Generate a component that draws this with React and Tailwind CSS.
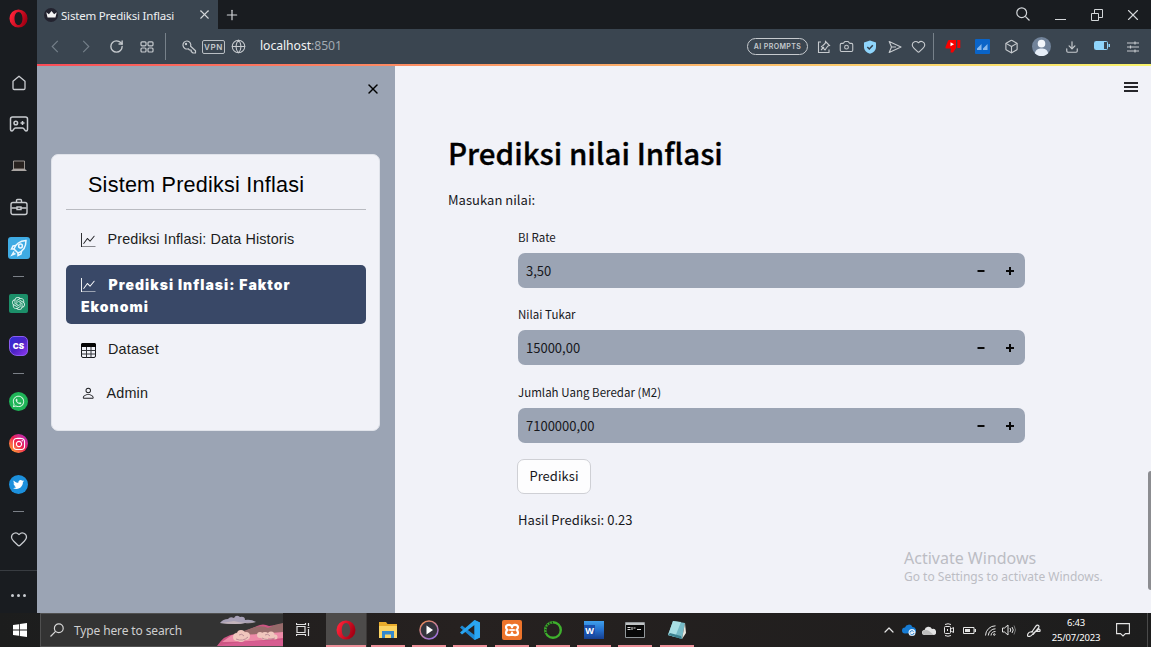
import React from "react";
import { ChevronLeft, ChevronRight, ChevronUp, RotateCw, Globe, Search, X, Plus, Camera, Heart, Box, Download } from "lucide-react";
import { BsGraphUp, BsPerson } from "react-icons/bs";
import { FaInstagram, FaTwitter, FaWhatsapp } from "react-icons/fa";
import { SiOpenai } from "react-icons/si";

const UI = "font-['Noto_Sans',sans-serif]";

function OperaRing({ className }) {
  return (
    <svg viewBox="0 0 20 20" className={className}>
      <defs>
        <linearGradient id="operaRed" x1="0" y1="0" x2="1" y2="0.4">
          <stop offset="0.2" stopColor="#fb2036" />
          <stop offset="1" stopColor="#a70014" />
        </linearGradient>
      </defs>
      <path fillRule="evenodd" fill="url(#operaRed)" d="M10 .5a9.5 9.5 0 1 0 0 19 9.5 9.5 0 0 0 0-19Zm0 2.6c2.5 0 4.2 3 4.2 6.9s-1.700 6.900-4.200 6.900S5.800 13.900 5.800 10 7.500 3.100 10 3.100Z" />
    </svg>
  );
}

function Cell({ className, children }) {
  return <div className={"flex shrink-0 items-center justify-center " + className}>{children}</div>;
}

function Dash() {
  return <div className="h-px w-[11px] bg-[#7b8087]" />;
}

function Sidebar() {
  return (
    <aside className="flex w-[37px] shrink-0 flex-col bg-[#191c20] text-[#c9ccd0]">
      <Cell className="mb-[26px] h-9"><OperaRing className="size-[19px]" /></Cell>
      <Cell className="h-[42px]">
        <svg viewBox="0 0 16 16" className="size-4" fill="none" stroke="currentColor" strokeWidth="1.3"><path d="M8 1.200 2 6.300V13.200q0 1.300 1.300 1.300h9.400q1.300 0 1.300-1.300V6.300Z" strokeLinejoin="round" /></svg>
      </Cell>
      <Cell className="h-[41px] pb-px">
        <svg viewBox="0 0 20 18" className="h-[18px] w-5" fill="none" stroke="currentColor" strokeWidth="1.500"><path d="M3.500 2h13q2 0 2 2v10.500q0 1.500-1.500 1.500c-1.500 0-1.500-3-3.500-3h-7c-2 0-2 3-3.500 3q-1.500 0-1.500-1.500V4q0-2 2-2Z" /><circle cx="6.800" cy="8" r="1.800" /><path d="M13.500 6v4M11.500 8h4" /></svg>
      </Cell>
      <Cell className="h-[42px]">
        <svg viewBox="0 0 16 12" className="h-3 w-4"><path d="M2.500 1h11v8h-11z" fill="#28221f" stroke="#b5aeaa" strokeWidth=".8" /><path d="M0 11l2-2h12l2 2z" fill="#aaa5a2" /></svg>
      </Cell>
      <Cell className="h-10">
        <svg viewBox="0 0 18 18" className="size-[18px]" fill="none" stroke="currentColor" strokeWidth="1.400"><rect x="1" y="4.500" width="16" height="12" rx="2" /><path d="M6.500 4.500V2.500q0-1 1-1h3q1 0 1 1v2M1.500 10H7M11 10h5.500M7 9h4v2.500H7z" /></svg>
      </Cell>
      <Cell className="h-[42px]">
        <div className="flex size-[22px] items-center justify-center rounded-[3px] bg-[#3fabe3]">
          <svg viewBox="0 0 18 18" className="size-[18px]" fill="none" stroke="#eaf7ff" strokeWidth="1.500"><path d="M4 10C5.500 5.500 9.500 2 16 1.500 16 8 12.500 12.500 8 14Z" /><circle cx="10.500" cy="7" r="1.900" /><path d="M6 6.500 3 7l-1.500 3L4 10M11.500 12l-.5 3-3 1.500V14M4 12.500 2 16l3.500-1.500" /></svg>
        </div>
      </Cell>
      <Cell className="h-[14px]"><Dash /></Cell>
      <Cell className="h-[42px] pb-px">
        <div className="flex size-[19px] items-center justify-center rounded-[2px] bg-[#1c8f69]"><SiOpenai className="size-[13px] text-[#dcefe8]" /></div>
      </Cell>
      <Cell className="h-[41px]">
        <div className="flex h-5 w-[19px] items-center justify-center rounded-[5px] rounded-bl-[8px] border border-[#8a5cf0] bg-linear-to-br from-[#2a2fd8] via-[#4c22c4] to-[#8e35ee] font-['Inter',sans-serif] text-[8px] leading-none font-black text-white">CS</div>
      </Cell>
      <Cell className="h-[15px]"><Dash /></Cell>
      <Cell className="h-[42px] pb-px">
        <div className="flex size-[19px] items-center justify-center rounded-full bg-[#1fb457]"><FaWhatsapp className="size-[13px] text-[#d9f5e3]" /></div>
      </Cell>
      <Cell className="h-[41px]">
        <div className="flex size-[19px] items-center justify-center rounded-full bg-linear-to-bl from-[#b010c8] via-[#f01a50] to-[#ffb010]"><FaInstagram className="size-[14px] text-white" /></div>
      </Cell>
      <Cell className="h-[41px]">
        <div className="flex size-[19px] items-center justify-center rounded-full bg-[#1c90dc]"><FaTwitter className="size-[11px] text-white" /></div>
      </Cell>
      <Cell className="h-[14px] pb-px"><Dash /></Cell>
      <Cell className="h-[42px] pb-[2px]"><Heart className="size-[18px]" strokeWidth={1.7} /></Cell>
      <div className="mt-[9px] flex flex-1 items-center justify-center gap-[3px] border-t border-[#383c41] pt-[6px]">
        <span className="size-[3px] rounded-full bg-[#c9ccd0]" />
        <span className="size-[3px] rounded-full bg-[#c9ccd0]" />
        <span className="size-[3px] rounded-full bg-[#c9ccd0]" />
      </div>
    </aside>
  );
}

function TabBar() {
  return (
    <div className="flex h-[29px] shrink-0 bg-[#191c20] text-[#d3d6d9]">
      <div className="flex w-[181px] items-center bg-[#3a4550] pl-[7px]">
        <div className="flex size-[14px] items-center justify-center rounded-full bg-[#23232f]">
          <svg viewBox="0 0 12 8" className="h-[7px] w-[11px]" fill="#f3f3f3"><path d="M0 1.500 3 3.800 6 0l3 3.800 3-2.300L10.500 7.500h-9z" /></svg>
        </div>
        <span className={"ml-[3px] w-[130px] whitespace-nowrap pt-[2px] text-[11.500px] tracking-[-0.200px] text-[#eef0f2] " + UI}>Sistem Prediksi Inflasi</span>
        <X className="ml-[6px] size-[15px]" strokeWidth={1.7} />
      </div>
      <Cell className="w-[27px]"><Plus className="size-4" strokeWidth={1.8} /></Cell>
      <div className="ml-auto flex">
        <Cell className="w-[30px] pb-[2px]">
          <svg viewBox="0 0 14 14" className="size-[14px]" fill="none" stroke="currentColor" strokeWidth="1.200"><circle cx="5.700" cy="5.700" r="4.900" /><path d="m9.300 9.300 4.200 4.200" /></svg>
        </Cell>
        <Cell className="ml-[10px] w-6 pt-[10px]"><div className="h-px w-[11px] bg-[#d3d6d9]" /></Cell>
        <Cell className="ml-3 w-[26px]">
          <svg viewBox="0 0 12 12" className="size-3" fill="none" stroke="currentColor"><path d="M.5 4.500h7v7h-7zM3.500 4.500v-4h8v8h-4" /></svg>
        </Cell>
        <Cell className="w-[41px] pl-[5px]"><X className="size-[18px]" strokeWidth={1.5} /></Cell>
      </div>
    </div>
  );
}

function Toolbar() {
  return (
    <div className={"flex h-[35px] shrink-0 items-center bg-[#3a4550] pr-[7px] text-[#c6cace] " + UI}>
      <Cell className="w-9 text-[#75808a]">
        <svg viewBox="0 0 8 14" className="h-[13px] w-2" fill="none" stroke="currentColor" strokeWidth="1.200"><path d="M7 1 1 7l6 6" /></svg>
      </Cell>
      <Cell className="w-[26px] text-[#75808a]">
        <svg viewBox="0 0 8 14" className="h-[13px] w-2" fill="none" stroke="currentColor" strokeWidth="1.200"><path d="m1 1 6 6-6 6" /></svg>
      </Cell>
      <Cell className="w-[34px]"><RotateCw className="size-[15px]" strokeWidth={2.2} /></Cell>
      <Cell className="w-7">
        <svg viewBox="0 0 14 12" className="h-3 w-[14px]" fill="none" stroke="currentColor" strokeWidth="1.200"><rect x="1" y=".8" width="5" height="4" rx="1" /><rect x="8" y=".8" width="5" height="4" rx="1" /><rect x="1" y="7" width="5" height="4" rx="1" /><rect x="8" y="7" width="5" height="4" rx="1" /></svg>
      </Cell>
      <div className="ml-1 h-[27px] w-px bg-[#77818a]" />
      <Cell className="ml-[13px] w-5">
        <svg viewBox="0 0 16 16" className="size-4" fill="none" stroke="currentColor" strokeWidth="1.200"><path d="M6 2a4 4 0 1 0 1.200 7.800L8.500 11h1.700v1.500L12 14h2.500v-2.300L9.600 7.300A4 4 0 0 0 6 2Z" strokeLinejoin="round" /><circle cx="5" cy="5" r=".6" /></svg>
      </Cell>
      <div className="ml-[3px] flex h-[14px] w-[23px] items-center justify-center rounded-[2px] border border-[#b9bec3] font-['Inter',sans-serif] text-[8px] leading-none font-semibold tracking-[0.700px]">VPN</div>
      <Cell className="ml-[3px] w-5"><Globe className="size-[15px]" strokeWidth={1.7} /></Cell>
      <div className="ml-3 pb-px text-[12.200px] tracking-[-0.050px] text-[#a2a9b0]"><span className="text-[#f2f4f5]">localhost</span>:8501</div>

      <div className="ml-auto flex h-[17px] w-[61px] items-center justify-center rounded-full border border-[#c6cace] font-['Inter',sans-serif] text-[7px] leading-none font-semibold tracking-[0.400px] whitespace-nowrap">AI PROMPTS</div>
      <Cell className="ml-1 w-[23px]">
        <svg viewBox="0 0 14 14" className="size-[14px]" fill="none" stroke="currentColor" strokeWidth="1.100"><path d="M4 2H1.500v10.500H12V9.500M4 10l3-3M8.500 1.500l4 4-1.500.5L9 8.500 8 10 4.500 6.500 6 5.500 8.300 3.200z" /></svg>
      </Cell>
      <Cell className="w-[23px]"><Camera className="size-[15px]" strokeWidth={1.7} /></Cell>
      <Cell className="w-6">
        <svg viewBox="0 0 14 14" className="size-[14px]"><path d="M7 .5 13 2.500V7c0 3.500-2.500 5.500-6 6.700C3.500 12.500 1 10.500 1 7V2.500Z" fill="#8fd5fb" /><path d="m4.300 7 2 2 3.500-3.800" stroke="#33414d" strokeWidth="1.500" fill="none" /></svg>
      </Cell>
      <Cell className="w-[26px]">
        <svg viewBox="0 0 14 14" className="size-[14px]" fill="none" stroke="currentColor" strokeWidth="1.100"><path d="M1.200 1.500 13 7 1.200 12.500 3.500 7ZM3.500 7H8" strokeLinejoin="round" /></svg>
      </Cell>
      <Cell className="w-5"><Heart className="size-[15px]" strokeWidth={1.8} /></Cell>
      <div className="ml-[5px] h-[27px] w-px bg-[#77818a]" />
      <Cell className="ml-2 w-[22px] pb-[2px]">
        <svg viewBox="0 0 16 14" className="h-[14px] w-4"><path d="M4 1h7v8l-3 4.500H5.500L6 9.500H1.500Q0 9.500.5 8L3 1.700Z" fill="#f80000" /><path d="M12.300 1h3v8h-3z" fill="#f80000" /><path d="M5.500 3.200v4L9 5.200z" fill="#fff" /></svg>
      </Cell>
      <Cell className="ml-[7px] w-[22px]">
        <svg viewBox="0 0 15 15" className="size-[15px]"><rect width="15" height="15" rx="1" fill="#0a64c8" /><path d="M2 11V9.500L6.500 5v6zM8 11V9.500L12.500 5v6z" fill="#86b7ec" /></svg>
      </Cell>
      <Cell className="ml-[7px] w-[22px]"><Box className="size-[15px]" strokeWidth={1.8} /></Cell>
      <Cell className="ml-2 w-[22px] pb-px">
        <svg viewBox="0 0 20 20" className="size-[19px]"><circle cx="10" cy="10" r="10" fill="#71839a" /><circle cx="10" cy="7" r="4" fill="#f2f6fb" /><path d="M3 17c1-4 3.500-5 7-5s6 1 7 5c-4 4-10 4-14 0Z" fill="#e6eef8" /></svg>
      </Cell>
      <Cell className="ml-[9px] w-[22px]"><Download className="size-[14px]" strokeWidth={2} /></Cell>
      <Cell className="ml-2 w-[22px]">
        <svg viewBox="0 0 16 9" className="mb-[2px] h-[9px] w-4"><rect x=".5" y=".5" width="13" height="8" rx="1" fill="none" stroke="#8fd5fb" /><path d="M1 1h9v7H1zM14.500 3H16v3h-1.500z" fill="#8fd5fb" /></svg>
      </Cell>
      <Cell className="ml-[9px] w-[22px]">
        <svg viewBox="0 0 12 12" className="size-3" stroke="currentColor" strokeWidth="1.200"><path d="M0 2h12M0 6h12M0 10h12M8 .5v3M3.500 4.500v3M8 8.500v3" /></svg>
      </Cell>
    </div>
  );
}

function TableIcon() {
  return (
    <svg viewBox="0 0 15 15" className="mr-[12px] size-[15px]">
      <rect x=".5" y=".5" width="14" height="14" rx="1.500" fill="none" stroke="#17181c" />
      <path d="M0 4V1.500Q0 0 1.500 0h12Q15 0 15 1.500V4z" fill="#050505" />
      <path d="M.5 7.500h14M.5 11h14M5.500 4v10.500M10 4v10.500" stroke="#33353a" />
    </svg>
  );
}

function NavPanel() {
  return (
    <div className="flex w-[358px] shrink-0 flex-col bg-[#9ba4b4] px-[14px] font-['Liberation_Sans',sans-serif] text-[#1c1d20]">
      <div className="flex h-[88px] justify-end pt-[15px]"><X className="size-[16px] text-black" strokeWidth={2.2} /></div>
      <div className="flex h-[277px] w-[329px] flex-col rounded-[7px] border border-[#e0e3ea] bg-[#f1f2f8] pr-[13px] pl-[14px]">
        <div className="flex h-[55px] shrink-0 items-center border-b border-[#b9bbc1] pt-[6px] pl-[22px] text-[21.600px] tracking-[0.220px] whitespace-nowrap text-black">Sistem Prediksi Inflasi</div>
        <div className="mt-[7px] flex h-[44px] items-center pt-[2px] pl-[15px] text-[14.400px] tracking-[0.120px] whitespace-nowrap"><BsGraphUp className="mr-[12px] size-[14.500px]" />Prediksi Inflasi: Data Historis</div>
        <div className="mt-[4px] h-[59px] rounded-[5px] bg-[#394867] pt-[9px] pl-[15px] font-['Inter',sans-serif] text-[14px] leading-[22px] font-black tracking-[1.040px] text-white">
          <div className="flex items-center whitespace-nowrap"><BsGraphUp className="mr-[13px] size-[14.500px]" />Prediksi Inflasi: Faktor</div>
          <div>Ekonomi</div>
        </div>
        <div className="mt-[4px] flex h-[44px] items-center pl-[15px] text-[14.400px] tracking-[0.200px]"><TableIcon />Dataset</div>
        <div className="flex h-[44px] items-center pl-[15px] text-[14.400px] tracking-[0.150px]"><BsPerson className="mr-[11px] mb-[2px] size-[14.500px]" />Admin</div>
      </div>
    </div>
  );
}

function NumberField({ label, value, className }) {
  return (
    <div className={"flex flex-col " + className}>
      <div className="h-[24px] text-[11.500px] leading-[16px] tracking-[0.020px]">{label}</div>
      <div className="flex h-[35px] items-center rounded-[7px] bg-[#9ba4b4] pl-2 text-[13px]">
        <span className="flex-1">{value}</span>
        <svg viewBox="0 0 8 8" className="mr-[21px] size-2"><path d="M.5 3h7v2h-7z" fill="#080808" /></svg>
        <svg viewBox="0 0 8 8" className="mr-[11px] size-2"><path d="M3 0h2v3h3v2H5v3H3V5H0V3h3z" fill="#080808" /></svg>
      </div>
    </div>
  );
}

function Content() {
  return (
    <main className="flex flex-1 bg-[#f1f2f8] font-['Noto_Sans_CJK_SC',sans-serif] text-[#17181c]">
      <div className="flex w-[630px] flex-col pl-[53px]">
        <h1 className="mt-[62px] h-[50px] text-[29.500px] leading-[48px] font-medium whitespace-nowrap text-black [-webkit-text-stroke:0.350px_black]">Prediksi nilai Inflasi</h1>
        <p className="mt-[11px] h-[22px] text-[13px] leading-[22px] tracking-[0.030px]">Masukan nilai:</p>
        <div className="flex flex-col pl-[70px]">
          <NumberField label="BI Rate" value="3,50" className="mt-[18px] h-[77px]" />
          <NumberField label="Nilai Tukar" value="15000,00" className="h-[78px]" />
          <NumberField label="Jumlah Uang Beredar (M2)" value="7100000,00" className="h-[75px]" />
          <button className="-ml-px flex h-[35px] w-[74px] items-center justify-center rounded-[7px] border border-[#cfd0d5] bg-[#fdfdfe] pb-[2px] text-[13px] tracking-[0.050px]">Prediksi</button>
          <p className="mt-[15px] h-[22px] text-[13px] leading-[22px] tracking-[0.050px]">Hasil Prediksi: 0.23</p>
        </div>
      </div>
      <div className="flex flex-1 flex-col items-end">
        <div className="mt-4 mr-[13px] flex h-[10px] w-[14px] flex-col justify-between">
          <span className="h-[2px] bg-[#26262a]" />
          <span className="h-[2px] bg-[#26262a]" />
          <span className="h-[2px] bg-[#26262a]" />
        </div>
        <div className="mt-[379px] h-[119px] w-[3px] rounded-l-sm bg-[#8c8d91]" />
      </div>
    </main>
  );
}

function AppSlot({ children }) {
  return (
    <div className="flex w-[41.300px] flex-col items-center">
      <div className="flex flex-1 items-center pt-[2px]">{children}</div>
      <div className="h-[2px] w-[34px] bg-[#ec8f98]" />
    </div>
  );
}

function SearchArt() {
  return (
    <svg viewBox="0 0 66 32" className="h-8 w-[66px]">
      <path d="M0 32Q7 21 18 20q12-3 22-8 6-3 12 0l14-2v22Z" fill="#cd5583" />
      <path d="M18 19q10-2 20-6 8-2 13 1 7-4 15-5v11l-30 4Z" fill="#966a6a" />
      <path d="M15 21q20 0 51-3v6q-32 4-61 4Z" fill="#ed8ba8" />
      <path d="M0 32q20-5 66-6v6Z" fill="#d75d91" />
      <path d="M3 9q3-4 8-4 2-3 6-1 2-4 6-1 5-1 5 3 6-1 11 2-6 1-11 1-8 2-25 0Z" fill="#a7a0b6" />
      <path d="M3 9q9-1 14-2 8 3 22 1-6 2-11 1-8 2-25 0Z" fill="#c3b4bb" />
      <g fill="#f0c6bd"><circle cx="20" cy="23" r="4" /><circle cx="24" cy="20" r="4" /><circle cx="29" cy="22" r="4" /><circle cx="24" cy="24" r="4" /><circle cx="43" cy="21" r="3" /><circle cx="48" cy="22" r="4" /><circle cx="54" cy="21" r="3.500" /><circle cx="58" cy="23" r="2.500" /></g>
      <path d="M19 25q7 3 12-2M45 24q5 3 13 0M22 21q3-2 5 1M48 21q3-2 5 1" stroke="#bd8f97" fill="none" />
    </svg>
  );
}

function Taskbar() {
  return (
    <footer className={"flex h-[34px] shrink-0 bg-linear-to-r from-[#1c1d1d] via-[#262120] via-40% to-[#1d1d1d] text-[#e5e5e5] " + UI}>
      <Cell className="w-10">
        <svg viewBox="0 0 14 14" className="size-[14px]" fill="#fff"><path d="M0 2 6 1.200v5.400H0zM6.800 1.100 14 0v6.600H6.800zM0 7.400h6v5.400L0 12zM6.800 7.400H14V14l-7.200-1z" /></svg>
      </Cell>
      <div className="flex w-[243px] items-center border border-r-0 border-[#505050] bg-[#333333]">
        <svg viewBox="0 0 14 14" className="ml-[9px] size-[14px]" fill="none" stroke="#d8d8d8" strokeWidth="1.200"><circle cx="8.800" cy="5.200" r="4.400" /><path d="M5.600 8.400.5 13.500" /></svg>
        <span className="ml-[10px] flex-1 pt-[2px] text-[12px] tracking-[-0.130px] whitespace-nowrap text-[#cfcfcf]">Type here to search</span>
        <SearchArt />
      </div>
      <Cell className="w-[43px] pr-[3px] pb-[2px]">
        <svg viewBox="0 0 14 13" className="h-[13px] w-[14px]" fill="none" stroke="#e0e0e0" strokeWidth="1.200"><path d="M1 3.500h8v6H1zM.5 0v1.500h9V0M.5 13v-1.500h9V13M12.500 0v3M12.500 6v7M11.500 4.500h2" /></svg>
      </Cell>
      <div className="flex w-[41px] flex-col border-r border-[#3b3837] bg-[#4d4b4a]">
        <Cell className="flex-1 pt-[2px]"><OperaRing className="size-5" /></Cell>
        <div className="h-[2px] bg-[#ec8f98]" />
      </div>
      <AppSlot>
        <svg viewBox="0 0 18 16" className="h-4 w-[18px]"><path d="M0 0h7l1.500 2H18v14H0z" fill="#e9ac2c" /><path d="M0 4h18v12H0z" fill="#fcd463" /><path d="M3 16V9h12v7h-3v-3.500H6V16z" fill="#3488cc" /></svg>
      </AppSlot>
      <AppSlot>
        <svg viewBox="0 0 20 20" className="size-5"><defs><linearGradient id="mediaRing" x1="0" y1="0" x2=".6" y2="1"><stop offset="0" stopColor="#f08b4b" /><stop offset="1" stopColor="#9c72d8" /></linearGradient></defs><circle cx="10" cy="10" r="9" fill="#34343c" stroke="url(#mediaRing)" strokeWidth="1.500" /><path d="M7.500 5.500v9l6.500-4.500z" fill="#fff" /></svg>
      </AppSlot>
      <AppSlot>
        <svg viewBox="0 0 20 20" className="size-5"><path d="M14.500 0 20 2.500v15L14.500 20 0 7.500 2 5.500 14.500 15Z" fill="#1c88d3" /><path d="M14.500 0 20 2.500v15L14.500 20V5L2 14.500 0 12.500Z" fill="#2aa5f0" /></svg>
      </AppSlot>
      <AppSlot>
        <div className="flex size-5 items-center justify-center rounded-[2px] bg-[#ed742b]">
          <svg viewBox="0 0 16 14" className="h-[14px] w-4" fill="none" stroke="#fff" strokeWidth="2.200" strokeLinejoin="round"><path d="M8 4.300C8 1 2 1 2 4.300 2 6 3.500 7 3.500 7S2 8 2 9.700C2 13 8 13 8 9.700 8 13 14 13 14 9.700 14 8 12.500 7 12.500 7S14 6 14 4.300C14 1 8 1 8 4.300Z" /><path d="M5.200 7h5.600" strokeWidth="1.800" /></svg>
        </div>
      </AppSlot>
      <AppSlot>
        <svg viewBox="0 0 20 20" className="size-5" fill="none"><circle cx="10" cy="10" r="7.800" stroke="#3fb02d" strokeWidth="2.400" /><path d="M10 2.500a7.500 7.500 0 0 0-6.500 11.300" stroke="#1c3c1a" strokeWidth="1.800" strokeDasharray="1.200 1.500" /></svg>
      </AppSlot>
      <AppSlot>
        <div className="flex h-[18px] w-5 items-center bg-linear-to-b from-[#40a0ec] via-[#2570cd] to-[#173f90]">
          <div className="flex size-[11px] items-center justify-center bg-[#194fac] text-[9px] leading-none font-bold text-white">W</div>
        </div>
      </AppSlot>
      <AppSlot>
        <svg viewBox="0 0 20 16" className="h-4 w-5"><path d="M.5.5h19v15H.5z" fill="#080808" stroke="#92979a" /><path d="M1 1h18v2H1z" fill="#bfc2c4" /><path d="M2.500 5.500h3M7 5v3M8.500 6h2M12 7.500h4M2.500 7.500h3" stroke="#ddd" /></svg>
      </AppSlot>
      <AppSlot>
        <svg viewBox="0 0 20 18" className="h-[18px] w-5"><path d="M6 0 18 2 15 18 1 14Z" fill="#76bac6" /><path d="M6 0 14 1 8 16 1 14Z" fill="#a9dfe4" /><path d="m18 2 1 10-4 6Z" fill="#e9e8df" /><path d="m1 14 14 4-1-3-11-3Z" fill="#3d8290" /></svg>
      </AppSlot>

      <div className="ml-auto flex">
        <Cell className="w-5 pl-px"><ChevronUp className="size-4" strokeWidth={1.8} /></Cell>
        <Cell className="w-5 pl-px">
          <svg viewBox="0 0 14 12" className="h-3 w-[14px]"><path d="M3 9.500a3 3 0 0 1 0-6 4 4 0 0 1 7.500-.5A3.500 3.500 0 0 1 13 9Z" fill="#167bd3" /><circle cx="10" cy="8.500" r="3.500" fill="#e5f2fd" /><path d="M8 8.500a2 2 0 0 1 3.500-1M12 9a2 2 0 0 1-3.500 1" stroke="#1472c6" fill="none" /></svg>
        </Cell>
        <Cell className="w-5 pl-px">
          <svg viewBox="0 0 14 9" className="h-[9px] w-[14px]"><path d="M2.500 9a2.500 2.500 0 0 1 0-5A4 4 0 0 1 10 3a3 3 0 0 1 2 6Z" fill="#e4e4e4" /><path d="M1 5q3-2 6 0l5 4H3Q-.5 8 1 5Z" fill="#bdbdbd" /></svg>
        </Cell>
        <Cell className="w-[21px] pl-px">
          <svg viewBox="0 0 12 14" className="h-[14px] w-3" fill="none" stroke="currentColor"><rect x="1.500" y="3.500" width="6" height="7" rx="1" /><path d="m8 6 2.500-1.500v5L8 8M2 1.500q3-1.500 6 0M2 12.500q3 1.500 6 0M4.500 6v2" /></svg>
        </Cell>
        <Cell className="w-5 pl-px">
          <svg viewBox="0 0 13 7" className="h-[7px] w-[13px]"><path d="M.5.5h10.500v6H.5z" fill="none" stroke="#e5e5e5" /><path d="M2 2h5v3H2zM11.500 2H13v3h-1.500z" fill="#e5e5e5" /></svg>
        </Cell>
        <Cell className="w-[21px] pl-px">
          <svg viewBox="0 0 11 11" className="size-[11px]" fill="none" stroke="currentColor"><path d="M.5 10.500A10 10 0 0 1 10.500.8M3.300 10.500a7.200 7.200 0 0 1 7.200-6.700M6 10.500a4.500 4.500 0 0 1 4.500-4" /><circle cx="9.300" cy="9.500" r=".8" /></svg>
        </Cell>
        <Cell className="w-[17px]">
          <svg viewBox="0 0 14 12" className="h-3 w-[14px]" fill="none" stroke="currentColor"><path d="M.5 4h2L6 1v10L2.500 8h-2zM8 4q1.500 2 0 4M10 3q2.500 3 0 6" /><path d="M12 1.500q3 4.500 0 9" stroke="#777" /></svg>
        </Cell>
        <Cell className="w-[33px]">
          <svg viewBox="0 0 14 13" className="h-[13px] w-[14px]" fill="none" stroke="currentColor" strokeWidth="1.200"><path d="M4.500 8.500 9 2q1.500-1.500 2.500-.5t0 2.500L6 10.500M6 8Q2 7 .8 10t2 2.300C6 12 5.500 8 9 7.500s4.500.5 4-1.500-3 0-3 1" /></svg>
        </Cell>
        <div className="flex w-[52px] flex-col items-center pt-[2px] text-[9.500px] leading-[15px] tracking-[-0.200px] whitespace-nowrap text-white">
          <span>6:43</span>
          <span>25/07/2023</span>
        </div>
        <Cell className="w-[45px] pr-[3px]">
          <svg viewBox="0 0 14 14" className="size-[14px]" fill="none" stroke="currentColor" strokeWidth="1.100"><path d="M.6.600h12.800v10H9.500L7 13l-2.500-2.400H.6z" /></svg>
        </Cell>
        <div className="mr-[3px] w-px bg-[#4a4a4a]" />
      </div>
    </footer>
  );
}

export default function App() {
  return (
    <div className="relative flex h-[647px] w-[1151px] flex-col overflow-hidden">
      <div className="flex h-[613px]">
        <Sidebar />
        <div className="flex flex-1 flex-col">
          <TabBar />
          <Toolbar />
          <div className="h-[2px] shrink-0 bg-linear-to-r from-[#fa4b57] via-[#fba96a] to-[#f8f36c]" />
          <div className="flex flex-1">
            <NavPanel />
            <Content />
          </div>
        </div>
      </div>
      <Taskbar />
      <div className={"absolute top-[548px] left-[904px] whitespace-nowrap text-[#bcbdc4] " + UI}>
        <div className="text-[16px] leading-[20px]">Activate Windows</div>
        <div className="text-[12px] leading-[18px]">Go to Settings to activate Windows.</div>
      </div>
    </div>
  );
}
